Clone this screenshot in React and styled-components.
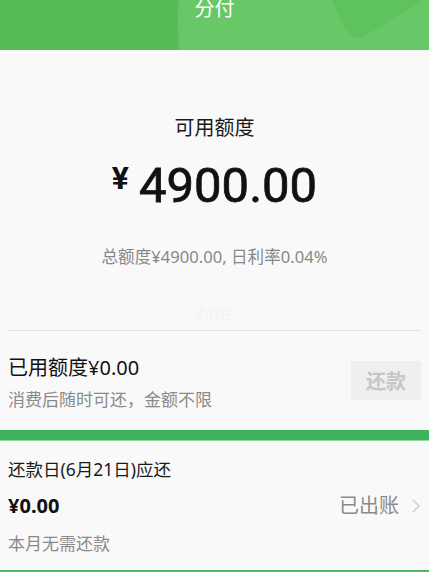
import styled, { createGlobalStyle } from "styled-components";

const GlobalStyle = createGlobalStyle`
  body {
    margin: 0;
    background: #f9f9f9;
    font-family: "Noto Sans", "Noto Sans CJK SC", sans-serif;
  }
`;

const Page = styled.div`
  width: 429px;
  height: 572px;
  overflow: hidden;
  background: #f9f9f9;
`;

const Header = styled.div`
  position: relative;
  height: 50px;
  overflow: hidden;
  display: flex;
  justify-content: center;
  align-items: flex-start;
`;

const HeaderArt = styled.svg`
  position: absolute;
  inset: 0;
`;

const HeaderTitle = styled.div`
  position: relative;
  margin-top: -3px;
  font-size: 20px;
  line-height: 24px;
  color: #fff;
`;

const Limit = styled.div`
  display: flex;
  flex-direction: column;
  align-items: center;
  padding-top: 66px;
  margin: 0 8px;
  border-bottom: 1px solid #e2e2e2;
  padding-bottom: 7px;
`;

const LimitTitle = styled.div`
  font-size: 20px;
  line-height: 24px;
  color: #1a1a1a;
`;

const Amount = styled.div`
  margin-top: 16px;
  display: flex;
  align-items: flex-start;
  line-height: 60px;
  color: #111;
  font-family: Roboto, "Noto Sans", sans-serif;
`;

const Yen = styled.span`
  font-size: 32px;
  line-height: 44px;
  margin-right: 10px;
  font-weight: 700;
`;

const Digits = styled.span`
  font-size: 49px;
  font-weight: 400;
  -webkit-text-stroke: 0.8px #111;
`;

const LimitNote = styled.div`
  margin-top: 30px;
  font-size: 16.6px;
  line-height: 22px;
  color: #888;
`;

const Watermark = styled.div`
  margin-top: 35px;
  font-size: 13px;
  line-height: 20px;
  color: #f1f1f1;
`;

const Row = styled.div`
  display: flex;
  align-items: center;
  justify-content: space-between;
  padding: ${(p) => p.$pad || "0"};
`;

const Col = styled.div`
  display: flex;
  flex-direction: column;
`;

const Main = styled.div`
  font-size: ${(p) => p.$size || 20}px;
  line-height: 28px;
  color: #111;
  font-weight: ${(p) => (p.$bold ? 700 : 400)};
`;

const Sub = styled.div`
  margin-top: ${(p) => p.$gap || 7}px;
  font-size: 17px;
  line-height: 22px;
  color: #8a8a8a;
`;

const RepayButton = styled.button`
  width: 70px;
  height: 39px;
  margin-top: -4px;
  border: none;
  border-radius: 2px;
  background: #efefef;
  color: #c6c6c6;
  font-family: "Noto Sans CJK SC", sans-serif;
  font-size: 20px;
  font-weight: 700;
  padding: 0;
`;

const GreenBar = styled.div`
  height: 10px;
  background: #3db45b;
  border-bottom: 1px solid #8fd6a0;
`;

const Bill = styled.div`
  padding: 16px 8px 15px;
  border-bottom: 2px solid #4db86a;
`;

const BillTitle = styled.div`
  font-size: 17.5px;
  line-height: 24px;
  color: #1a1a1a;
`;

const BillRow = styled.div`
  margin-top: 11px;
  display: flex;
  align-items: center;
  justify-content: space-between;
`;

const Status = styled.div`
  display: flex;
  align-items: center;
  gap: 12px;
  font-size: 20px;
  line-height: 28px;
  color: #8a8a8a;
`;

export default function App() {
  return (
    <Page>
      <GlobalStyle />
      <Header>
        <HeaderArt width="429" height="50" viewBox="0 0 429 50">
          <rect width="429" height="50" fill="#56bd56" />
          <circle cx="480" cy="20" r="302" fill="#68c868" />
          <path d="M328 -10 L344 28 Q354 44 370 33 L440 -10 Z" fill="#5ec35e" />
        </HeaderArt>
        <HeaderTitle>分付</HeaderTitle>
      </Header>

      <Limit>
        <LimitTitle>可用额度</LimitTitle>
        <Amount>
          <Yen>¥</Yen>
          <Digits>4900.00</Digits>
        </Amount>
        <LimitNote>总额度¥4900.00, 日利率0.04%</LimitNote>
        <Watermark>小程序</Watermark>
      </Limit>

      <Row $pad="23px 8px 19px">
        <Col>
          <Main>已用额度¥0.00</Main>
          <Sub>消费后随时可还，金额不限</Sub>
        </Col>
        <RepayButton>还款</RepayButton>
      </Row>

      <GreenBar />

      <Bill>
        <BillTitle>还款日(6月21日)应还</BillTitle>
        <BillRow>
          <Main $bold>¥0.00</Main>
          <Status>
            已出账
            <svg width="10" height="16" viewBox="0 0 10 16">
              <path d="M2 2 L8 8 L2 14" fill="none" stroke="#cfcfcf" strokeWidth="1.6" />
            </svg>
          </Status>
        </BillRow>
        <Sub $gap={13}>本月无需还款</Sub>
      </Bill>
    </Page>
  );
}
